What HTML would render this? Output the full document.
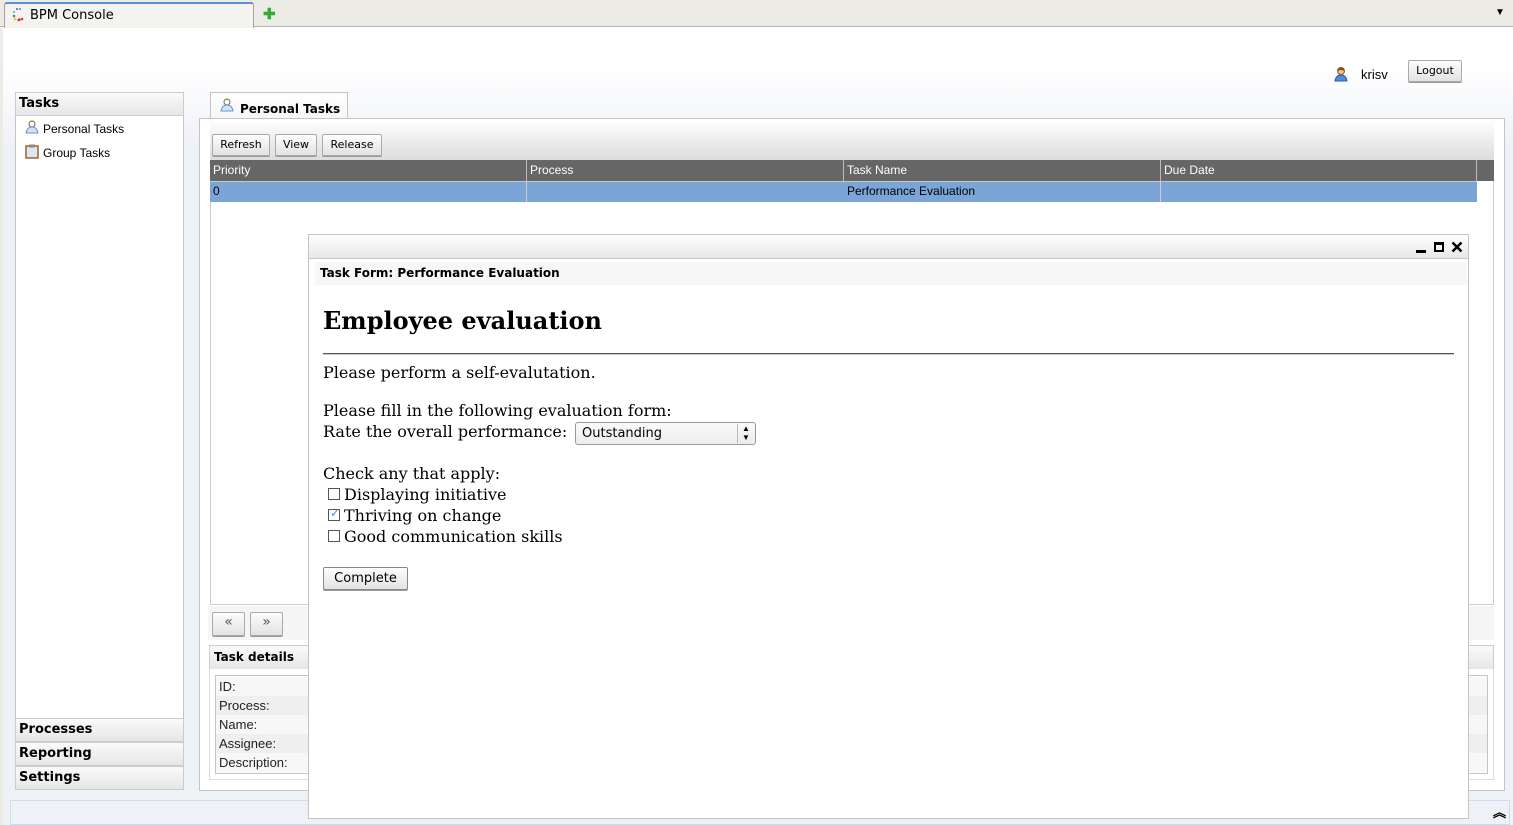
<!DOCTYPE html>
<html><head><meta charset="utf-8"><style>
*{box-sizing:border-box;margin:0;padding:0}
body{width:1513px;height:825px;overflow:hidden;position:relative;font-family:"Liberation Sans",sans-serif;font-size:12px;color:#000;background:#fff}
.a{position:absolute}
.b{font-family:"DejaVu Sans",sans-serif;font-weight:bold;font-size:12px}
.btn{position:absolute;border:1px solid #aaa;border-radius:2px;background:linear-gradient(#fdfdfd,#e2e2e2);font-family:"DejaVu Sans",sans-serif;font-size:11px;text-align:center;line-height:19px;box-shadow:0 1px 0 #999}
.hd{position:absolute;background:linear-gradient(#fafafa,#e6e6e6);border:1px solid #ccc;padding-left:3px;line-height:22px}
.serif{font-family:"DejaVu Serif",serif;font-size:16px}
.cb{position:absolute;width:12px;height:12px;border:1px solid #555;background:#fff}
.col{position:absolute;top:160px;height:21px;border-left:1px solid #bbb;color:#fff;padding-left:3px;line-height:20px}
.row{position:absolute;left:216px;width:1271px;height:19px;line-height:19px;padding-left:3px;font-size:13px;color:#222}
</style></head><body>
<div class="a" style="left:0;top:0;width:1513px;height:27px;background:#edebe6;border-bottom:1px solid #b8b4ac"></div>
<div class="a" style="left:4px;top:2px;width:250px;height:26px;background:#f4f3f0;border:1px solid #a9a59d;border-top:2px solid #5b8fd6;border-bottom:none;border-radius:3px 3px 0 0"></div>
<svg class="a" style="left:11px;top:7px" width="14" height="14"><circle cx="3" cy="9" r="1.3" fill="#38c"/><circle cx="3" cy="5" r="1" fill="#6a6"/><circle cx="6" cy="2" r="1" fill="#55a"/><circle cx="9" cy="2" r="1" fill="#a5a"/><circle cx="4" cy="12" r="1.3" fill="#ec2"/><circle cx="8" cy="13" r="1.5" fill="#d22"/><circle cx="11" cy="12" r="1.3" fill="#e33"/></svg>
<div class="a" style="left:30px;top:8px;font-family:'DejaVu Sans',sans-serif;font-size:13px">BPM Console</div>
<div class="a" style="left:263px;top:5px;font-size:15px;font-weight:bold;color:#3a3">✚</div>
<div class="a" style="left:1495px;top:7px;font-size:10px">▼</div>
<div class="a" style="left:0;top:28px;width:3px;height:797px;background:#edebe6"></div>
<div class="a" style="left:3px;top:28px;width:1510px;height:797px;background:linear-gradient(#fff 0px,#fff 40px,#eef1f6 120px,#eef1f6)"></div>
<svg class="a" style="left:1333px;top:66px" width="16" height="16"><circle cx="8" cy="5" r="3.5" fill="#f0c090" stroke="#a05a20"/><path d="M5 3 Q8 0 11 3 L11 5 Q8 3 5 5Z" fill="#8a4a1a"/><path d="M2 15 Q3 9 8 9 Q13 9 14 15Z" fill="#4a8ee0" stroke="#2a5ea0"/></svg>
<div class="a" style="left:1361px;top:67px;font-size:13px">krisv</div>
<div class="btn" style="left:1408px;top:60px;width:54px;height:22px">Logout</div>
<div class="a" style="left:15px;top:92px;width:169px;height:698px;background:#fff;border:1px solid #c4c4c4"></div>
<div class="hd b" style="left:15px;top:92px;width:169px;height:24px;font-size:13px">Tasks</div>
<svg class="a" style="left:25px;top:119px" width="14" height="15"><circle cx="7" cy="5" r="3" fill="#fff" stroke="#864"/><path d="M4 3 Q7 0 10 3" fill="#6a3" /><path d="M1 14 Q2 8 7 8 Q12 8 13 14Z" fill="#cde3f8" stroke="#6b95c8"/></svg>
<div class="a" style="left:43px;top:122px">Personal Tasks</div>
<svg class="a" style="left:25px;top:144px" width="14" height="15"><rect x="1" y="2" width="12" height="12" fill="#dbe9f7" stroke="#a0622a" stroke-width="1.5"/><rect x="4" y="0.5" width="6" height="3" fill="#888"/></svg>
<div class="a" style="left:43px;top:146px">Group Tasks</div>
<div class="hd b" style="left:15px;top:718px;width:169px;height:24px;font-size:13px">Processes</div>
<div class="hd b" style="left:15px;top:742px;width:169px;height:24px;font-size:13px">Reporting</div>
<div class="hd b" style="left:15px;top:766px;width:169px;height:24px;font-size:13px">Settings</div>
<div class="a" style="left:210px;top:92px;width:138px;height:27px;background:linear-gradient(#fff,#f4f6f9);border:1px solid #c4c4c4;border-bottom:none"></div>
<svg class="a" style="left:220px;top:97px" width="14" height="15"><circle cx="7" cy="5" r="3" fill="#fff" stroke="#864"/><path d="M4 3 Q7 0 10 3" fill="#6a3"/><path d="M1 14 Q2 8 7 8 Q12 8 13 14Z" fill="#cde3f8" stroke="#6b95c8"/></svg>
<div class="a b" style="left:240px;top:102px;font-size:12px">Personal Tasks</div>
<div class="a" style="left:199px;top:118px;width:1306px;height:673px;background:#fff;border:1px solid #c4c4c4"></div>
<div class="a" style="left:210px;top:120px;width:1284px;height:40px;background:linear-gradient(#fff,#dcdcdc)"></div>
<div class="btn" style="left:212px;top:134px;width:58px;height:22px">Refresh</div>
<div class="btn" style="left:275px;top:134px;width:42px;height:22px">View</div>
<div class="btn" style="left:322px;top:134px;width:60px;height:22px">Release</div>
<div class="a" style="left:210px;top:160px;width:1284px;height:445px;border:1px solid #ccc;border-top:none;background:#fff"></div>
<div class="a" style="left:210px;top:160px;width:1284px;height:21px;background:#666"></div>
<div class="col" style="left:210px;border:none">Priority</div>
<div class="col" style="left:526px">Process</div>
<div class="col" style="left:843px">Task Name</div>
<div class="col" style="left:1160px">Due Date</div>
<div class="a" style="left:1476px;top:160px;width:1px;height:21px;background:#bbb"></div>
<div class="a" style="left:210px;top:181px;width:1267px;height:21px;background:#7aa5d6;border-top:1px solid #c8c8c8"></div>
<div class="a" style="left:526px;top:181px;width:1px;height:21px;background:#ccc"></div>
<div class="a" style="left:1160px;top:181px;width:1px;height:21px;background:#ccc"></div>
<div class="a" style="left:213px;top:184px">0</div>
<div class="a" style="left:847px;top:184px">Performance Evaluation</div>
<div class="a" style="left:208px;top:606px;width:1286px;height:34px;background:#f5f5f5"></div>
<div class="btn" style="left:212px;top:612px;width:33px;height:24px;font-size:14px;color:#555">«</div>
<div class="btn" style="left:250px;top:612px;width:33px;height:24px;font-size:14px;color:#555">»</div>
<div class="hd b" style="left:209px;top:645px;width:1285px;height:25px;font-size:12px;padding-left:4px">Task details</div>
<div class="a" style="left:209px;top:669px;width:1285px;height:111px;border:1px solid #ddd;border-top:none;background:#fff"></div>
<div class="a" style="left:215px;top:675px;width:1273px;height:99px;border:1px solid #c4c4c4;background:#fff"></div>
<div class="row" style="top:677px;background:#f7f7f7">ID:</div>
<div class="row" style="top:696px;background:#efefef">Process:</div>
<div class="row" style="top:715px;background:#f7f7f7">Name:</div>
<div class="row" style="top:734px;background:#efefef">Assignee:</div>
<div class="row" style="top:753px;background:#f7f7f7">Description:</div>
<div class="a" style="left:10px;top:800px;width:1500px;height:25px;border:1px solid #cfdcec;background:#eef1f6"></div>
<div class="a" style="left:1493px;top:802px;font-size:13px;font-weight:bold">︽</div>
<div class="a" style="left:308px;top:234px;width:1161px;height:585px;background:#fff;border:1px solid #c4c4c4"></div>
<div class="a" style="left:309px;top:235px;width:1159px;height:24px;background:linear-gradient(#fff,#e8e8e8);border-bottom:1px solid #c8c8c8"></div>
<div class="a" style="left:1416px;top:250px;width:10px;height:3px;background:#000"></div>
<div class="a" style="left:1434px;top:242px;width:10px;height:10px;border:2px solid #000;border-top-width:3px"></div>
<svg class="a" style="left:1451px;top:241px" width="12" height="12"><path d="M1.5 1.5L10.5 10.5M10.5 1.5L1.5 10.5" stroke="#000" stroke-width="2.5"/></svg>
<div class="a" style="left:315px;top:262px;width:1152px;height:23px;background:#f7f7f7"></div>
<div class="a b" style="left:320px;top:266px;font-size:12px">Task Form: Performance Evaluation</div>
<div class="a" style="left:323px;top:306px;font-family:'DejaVu Serif',serif;font-weight:bold;font-size:24px">Employee evaluation</div>
<div class="a" style="left:323px;top:353px;width:1131px;height:2px;background:#555;border-bottom:1px solid #ccc"></div>
<div class="a serif" style="left:323px;top:363px">Please perform a self-evalutation.</div>
<div class="a serif" style="left:323px;top:401px">Please fill in the following evaluation form:</div>
<div class="a serif" style="left:323px;top:422px">Rate the overall performance:</div>
<div class="a" style="left:575px;top:422px;width:181px;height:23px;border:1px solid #999;border-radius:3px;background:linear-gradient(#fafafa,#ececec);font-family:'DejaVu Sans',sans-serif;font-size:13px;padding:3px 0 0 6px">Outstanding</div>
<div class="a" style="left:737px;top:424px;width:1px;height:19px;background:#bbb"></div>
<div class="a" style="left:742px;top:424px;font-size:8px;line-height:9px">▲<br>▼</div>
<div class="a serif" style="left:323px;top:464px">Check any that apply:</div>
<div class="cb" style="left:328px;top:488px"></div>
<div class="a serif" style="left:344px;top:485px">Displaying initiative</div>
<div class="cb" style="left:328px;top:509px"></div>
<div class="a" style="left:330px;top:506px;color:#4a90e2;font-size:12px">✓</div>
<div class="a serif" style="left:344px;top:506px">Thriving on change</div>
<div class="cb" style="left:328px;top:530px"></div>
<div class="a serif" style="left:344px;top:527px">Good communication skills</div>
<div class="btn" style="left:323px;top:567px;width:85px;height:23px;font-size:13px;line-height:21px;border-color:#888">Complete</div>
</body></html>
